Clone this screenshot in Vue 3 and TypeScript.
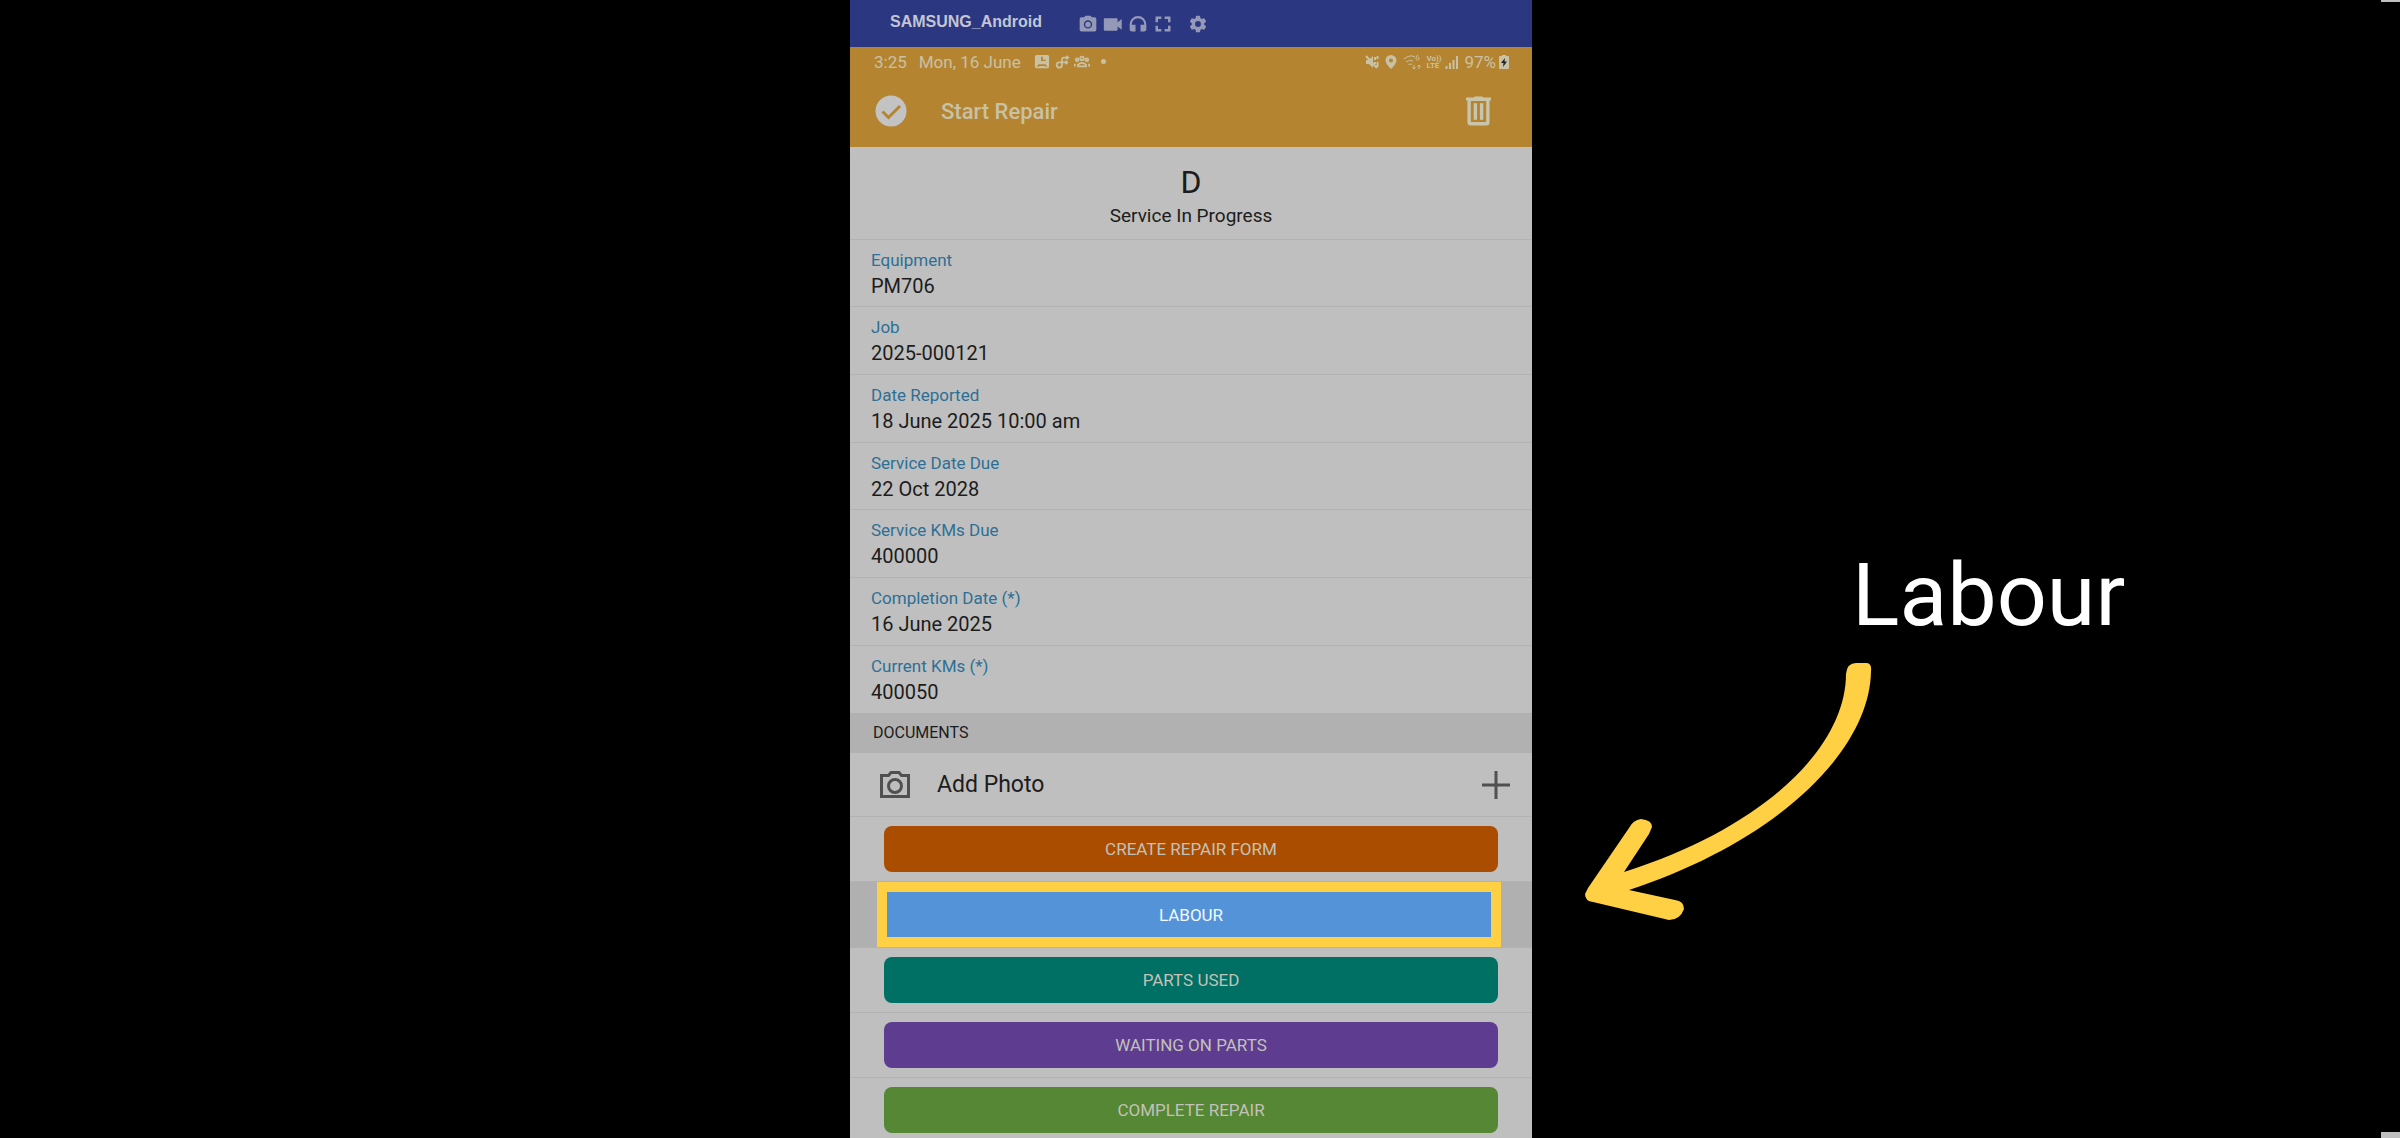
<script setup lang="ts">
interface Field {
  label: string
  value: string
}

interface Action {
  label: string
  tone: string
  highlighted?: boolean
}

const fields: Field[] = [
  { label: 'Equipment', value: 'PM706' },
  { label: 'Job', value: '2025-000121' },
  { label: 'Date Reported', value: '18 June 2025 10:00 am' },
  { label: 'Service Date Due', value: '22 Oct 2028' },
  { label: 'Service KMs Due', value: '400000' },
  { label: 'Completion Date (*)', value: '16 June 2025' },
  { label: 'Current KMs (*)', value: '400050' },
]

const actions: Action[] = [
  { label: 'CREATE REPAIR FORM', tone: 'orange' },
  { label: 'LABOUR', tone: 'blue', highlighted: true },
  { label: 'PARTS USED', tone: 'teal' },
  { label: 'WAITING ON PARTS', tone: 'purple' },
  { label: 'COMPLETE REPAIR', tone: 'green' },
]
</script>

<template>
  <div class="stage">
    <main class="phone">
      <header class="mirror-bar">
        <span class="device">SAMSUNG_Android</span>
        <div class="tools">
          <button type="button" aria-label="Screenshot">
            <svg viewBox="0 0 24 24"><path fill-rule="evenodd" d="M9 2 7.200 4H4a2 2 0 0 0-2 2v13a2 2 0 0 0 2 2h16a2 2 0 0 0 2-2V6a2 2 0 0 0-2-2h-3.200L15 2zm3 5.500a5 5 0 1 1 0 10 5 5 0 0 1 0-10zm0 1.700a3.300 3.300 0 1 0 0 6.600 3.300 3.300 0 0 0 0-6.600z" /></svg>
          </button>
          <button type="button" aria-label="Record">
            <svg viewBox="0 0 24 24"><path d="M17.500 10V6a1 1 0 0 0-1-1H2a1 1 0 0 0-1 1v13a1 1 0 0 0 1 1h14.500a1 1 0 0 0 1-1v-4l5 4V6z" /></svg>
          </button>
          <button type="button" aria-label="Audio">
            <svg viewBox="0 0 24 24"><path d="M12 2.500A10 10 0 0 0 2 12.500V18a3 3 0 0 0 3 3h4v-8H4.500v-.5a7.500 7.500 0 0 1 15 0v.5H15v8h4a3 3 0 0 0 3-3v-5.500a10 10 0 0 0-10-10z" /></svg>
          </button>
          <button type="button" aria-label="Full screen">
            <svg viewBox="0 0 24 24"><path d="M3 3h7v3H6v4H3zM14 3h7v7h-3V6h-4zM3 14h3v4h4v3H3zM18 14h3v7h-7v-3h4z" /></svg>
          </button>
          <button type="button" class="settings" aria-label="Settings">
            <svg viewBox="0 0 24 24"><path d="M19.430 12.980c.04-.32.070-.64.070-.98s-.03-.66-.07-.98l2.110-1.650c.19-.15.240-.42.120-.64l-2-3.460c-.12-.22-.39-.3-.61-.22l-2.490 1c-.52-.4-1.080-.73-1.690-.98l-.38-2.650A.49.490 0 0 0 14 2h-4c-.25 0-.46.180-.49.420l-.38 2.650c-.61.250-1.170.590-1.690.980l-2.490-1c-.23-.09-.49 0-.61.220l-2 3.460c-.13.220-.07.490.120.640l2.110 1.650c-.04.320-.07.650-.07.980s.03.660.070.980l-2.110 1.650c-.19.150-.24.420-.12.640l2 3.460c.12.220.39.300.61.220l2.490-1c.52.400 1.080.730 1.690.980l.38 2.650c.03.240.24.420.49.420h4c.25 0 .46-.18.490-.42l.38-2.650c.61-.25 1.170-.59 1.690-.98l2.490 1c.23.090.49 0 .61-.22l2-3.460c.12-.22.070-.49-.12-.64zM12 15.500a3.500 3.500 0 1 1 0-7 3.500 3.500 0 0 1 0 7z" /></svg>
          </button>
        </div>
      </header>

      <div class="app-head">
        <div class="status">
          <time>3:25</time>
          <span class="day">Mon, 16 June</span>
          <div class="notices">
            <svg class="n18" viewBox="0 0 18 18"><path fill-rule="evenodd" d="M3 1h12a2 2 0 0 1 2 2v11a2 2 0 0 1-2 2H3a2 2 0 0 1-2-2V3a2 2 0 0 1 2-2zm5 2v5h5V6.500h-3V3zM3 14.500l2-3h8l2 3-4-1H7z" /></svg>
            <svg class="n18" viewBox="0 0 18 18"><path class="line" d="M16 4H11a2 2 0 0 0-2 2v6.500A3 3 0 1 1 5 9.500h10M14 2l2 2-2 2M13 7.500l2 2-2 2" /></svg>
            <svg class="n18" viewBox="0 0 18 18"><path class="line" d="M9 3a2 2 0 1 1 0 4 2 2 0 0 1 0-4zM3.500 5a1.500 1.500 0 1 1 0 3 1.500 1.500 0 0 1 0-3zM14.500 5a1.500 1.500 0 1 1 0 3 1.500 1.500 0 0 1 0-3zM4.500 14v-2q4.500-4 9 0v2zM1 14v-3M17 14v-3" /></svg>
            <i class="dot"></i>
          </div>
          <div class="signals">
            <svg class="n14" viewBox="0 0 14 16"><path d="M1 6h3l4-4v12l-4-4H1z" /><path class="line" d="M1 2l11 12M10 3v3M12.500 2v3M10 8v2M12.500 8v5" /></svg>
            <svg class="n14" viewBox="0 0 14 16"><path fill-rule="evenodd" d="M7 1a5.500 5.500 0 0 1 5.500 5.500C12.500 10 7 15 7 15S1.500 10 1.500 6.500A5.500 5.500 0 0 1 7 1zm0 3.500a2 2 0 1 0 0 4 2 2 0 0 0 0-4z" /></svg>
            <svg class="n18" viewBox="0 0 18 16"><path class="line thin" d="M1 5q6-5 11-2M3 8q4-3 7-1M5.500 10.500q2-1 3.500 0M15 1q-2 1-2 3.500a1.500 1.500 0 1 0 1.500-1.500M11 11v4M9.500 13.500 11 15l1.500-1.500M16 15v-4M14.500 12.500 16 11l1.500 1.500" /></svg>
            <span class="volte"><span>Vo))</span><span>LTE</span></span>
            <svg class="n14" viewBox="0 0 14 16"><path class="line" d="M1.500 12v3M5 9v6M8.500 6v9M12 2v13" /></svg>
            <span class="percent">97%</span>
            <svg class="battery" viewBox="0 0 10 16"><path d="M3 1h4v1h2q1 0 1 1v11q0 1-1 1H1q-1 0-1-1V3q0-1 1-1h2z" /><path class="bolt" d="M6 4 2 9h2.500L4 13l4-5.500H5.500z" /></svg>
          </div>
        </div>
        <div class="title-row">
          <button type="button" aria-label="Confirm">
            <svg class="confirm" viewBox="0 0 32 32"><circle cx="16" cy="16" r="15.500" /><path d="M7.500 16.500l6 6L25 11" /></svg>
          </button>
          <h1>Start Repair</h1>
          <button type="button" aria-label="Delete">
            <svg class="trash" viewBox="0 0 26 32"><path d="M0 2h8l1-1h8l1 1h8v3H0z" /><path fill-rule="evenodd" d="M1.500 4h23v24a3 3 0 0 1-3 3h-17a3 3 0 0 1-3-3zm3.500 1.500v22h16v-22z" /><path d="M8 8h3.500v17H8zM14.500 8H18v17h-3.500z" /></svg>
          </button>
        </div>
      </div>

      <section class="summary">
        <h2>D</h2>
        <p>Service In Progress</p>
      </section>

      <dl class="fields">
        <div v-for="field in fields" :key="field.label" class="field">
          <dt>{{ field.label }}</dt>
          <dd>{{ field.value }}</dd>
        </div>
      </dl>

      <h3 class="section-title">DOCUMENTS</h3>
      <button type="button" class="add-photo">
        <svg class="camera" viewBox="0 0 32 30"><path d="M2.500 5.500h7l2.500-3h8l2.500 3h7v21h-27z" /><circle cx="16" cy="16" r="6.500" /></svg>
        <span>Add Photo</span>
        <svg class="plus" viewBox="0 0 28 28"><path d="M14 0v28M0 14h28" /></svg>
      </button>

      <div class="actions">
        <div v-for="action in actions" :key="action.label" class="action-row" :class="{ highlighted: action.highlighted }">
          <button type="button" :class="action.tone">{{ action.label }}</button>
        </div>
      </div>
    </main>

    <aside class="callout">
      <p>Labour</p>
      <svg viewBox="0 0 288 260" aria-hidden="true">
        <path d="M261 12Q262 1 271 1H281Q287 1 286 9C285 90 190 180 44 228L90 238Q99 239 99 247Q95 258 84 258L8 240Q0 239 0 232L3 226L44 166Q48 158 56 157Q67 158 67 165L64 172L39 210C180 165 261 85 261 12Z" />
      </svg>
    </aside>
    <i class="corner top"></i>
    <i class="corner bottom"></i>
  </div>
</template>

<style>
body {
  margin: 0;
  background: #000;
}
</style>

<style scoped>
* {
  box-sizing: border-box;
}

.stage {
  position: relative;
  display: grid;
  grid-template-columns: 850fr 682fr 868fr;
  min-height: 100vh;
  background: #000;
  font-family: Roboto, sans-serif;
}

h1,
h2,
h3,
p,
dl,
dd {
  margin: 0;
  font-weight: 400;
}

button {
  padding: 0;
  border: 0;
  background: none;
  color: inherit;
  font: inherit;
}

svg {
  display: block;
  flex: none;
}

.phone {
  grid-column: 2;
  background: #bfbfbf;
  color: #1c1c1c;
}

.mirror-bar {
  display: flex;
  align-items: center;
  height: 47px;
  padding-left: 40px;
  background: #2b3780;
}

.device {
  width: 188px;
  padding-bottom: 4px;
  color: #c3c6d2;
  font: 700 16px/20px "Liberation Sans", sans-serif;
}

.tools {
  display: flex;
  gap: 5px;
}

.tools svg {
  width: 20px;
  height: 20px;
  fill: #9599b8;
}

.settings {
  margin-left: 10px;
}

.app-head {
  height: 100px;
  background: #b48431;
  color: #c9c1a4;
}

.status {
  display: flex;
  align-items: center;
  height: 29px;
  padding: 0 23px 0 24px;
  font-size: 17px;
}

.day {
  margin-left: 12px;
}

.notices {
  display: flex;
  align-items: center;
  gap: 2px;
  margin-left: 12px;
}

.signals {
  display: flex;
  align-items: center;
  gap: 5px;
  margin-left: auto;
}

.status svg {
  height: 16px;
  fill: #c9c1a4;
}

.status .line {
  fill: none;
  stroke: #c9c1a4;
  stroke-width: 2;
}

.status .thin {
  stroke-width: 1;
}

.n18 {
  width: 18px;
}

.n14 {
  width: 14px;
}

.battery {
  width: 10px;
  margin-left: -2px;
}

.status .bolt {
  fill: #222;
}

.dot {
  width: 5px;
  height: 5px;
  margin-left: 8px;
  border-radius: 50%;
  background: #c9c1a4;
}

.volte {
  display: flex;
  flex-direction: column;
  width: 14px;
  font-size: 8px;
  font-weight: 700;
  line-height: 7px;
}

.title-row {
  display: flex;
  align-items: center;
  height: 71px;
  padding: 0 41px 0 25px;
}

.title-row button {
  margin-bottom: 2px;
}

.title-row h1 {
  flex: 1;
  margin-left: 34px;
  font-size: 22px;
  font-weight: 500;
}

.confirm {
  width: 32px;
  height: 32px;
}

.confirm circle {
  fill: #c3c3c3;
}

.confirm path {
  fill: none;
  stroke: #b48431;
  stroke-width: 3;
}

.trash {
  width: 25px;
  height: 32px;
  fill: #c9c5ac;
}

.summary {
  height: 93px;
  padding-top: 16px;
  border-bottom: 1px solid #b3b3b3;
  text-align: center;
}

.summary h2 {
  font-size: 32px;
  line-height: 38px;
}

.summary p {
  font-size: 19px;
  line-height: 30px;
}

.field {
  height: 68px;
  padding: 8px 21px 0;
  border-bottom: 1px solid #b3b3b3;
}

.field:nth-child(3n + 1) {
  height: 67px;
}

.field:last-child {
  border-bottom: 0;
}

.field dt {
  color: #2d6f96;
  font-size: 17px;
  line-height: 24px;
}

.field dd {
  font-size: 20px;
  line-height: 28px;
}

.section-title {
  height: 40px;
  padding-left: 23px;
  background: #b1b1b1;
  font-size: 16px;
  line-height: 40px;
}

.add-photo {
  display: flex;
  align-items: center;
  width: 100%;
  height: 64px;
  padding: 0 22px 0 29px;
  border-bottom: 1px solid #b3b3b3;
  font-size: 23px;
  text-align: left;
}

.add-photo span {
  flex: 1;
  margin-left: 26px;
}

.camera {
  width: 32px;
  height: 30px;
}

.plus {
  width: 28px;
  height: 28px;
}

.camera,
.plus {
  fill: none;
  stroke: #505050;
  stroke-width: 3;
}

.action-row {
  padding: 9px 34px;
  border-bottom: 1px solid #b3b3b3;
}

.action-row button {
  display: block;
  width: 100%;
  height: 46px;
  border-radius: 8px;
  color: #c2c2b8;
  font-size: 17px;
}

.action-row.highlighted {
  padding: 0 31px 0 27px;
  background: #b0b0b0;
}

.action-row.highlighted button {
  height: 65px;
  padding-left: 4px;
  border: 10px solid #ffd043;
  border-radius: 0;
  color: #f4fafc;
}

.action-row:last-child {
  padding-bottom: 4px;
  border-bottom: 0;
}

.orange {
  background: #ab4d00;
}

.blue {
  background: #5593d9;
}

.teal {
  background: #007064;
}

.purple {
  background: #5e3d90;
}

.green {
  background: #568735;
}

.callout {
  grid-column: 3;
  display: flex;
  flex-direction: column;
  padding: 545px 0 0 53px;
}

.callout p {
  margin-left: 267px;
  color: #fff;
  font: 400 88px/100px Roboto, sans-serif;
}

.callout svg {
  width: 288px;
  height: 260px;
  margin-top: 17px;
  fill: #ffd043;
}

.corner {
  position: absolute;
  right: 0;
  width: 19px;
  background: #bfbfbf;
}

.top {
  top: 0;
  height: 2px;
}

.bottom {
  bottom: 0;
  height: 6px;
}
</style>
